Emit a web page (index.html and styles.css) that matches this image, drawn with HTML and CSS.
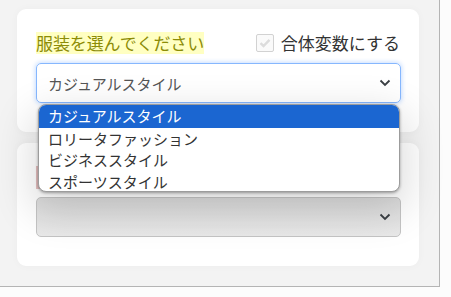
FILE: index.html
```html
<!doctype html>
<html lang="ja">
<head>
    <meta charset="UTF-8">
    <title>服装</title>
    <link rel="stylesheet" href="styles.css">
</head>
<body>
    <div class="frame">
        <div class="card">
            <div class="head">
                <span class="title">服装を選んでください</span>
                <label class="merge">
                    <span class="check">
                        <svg width="12" height="10" viewBox="0 0 12 10"><path d="M1.5 5.2 4.5 8 10.5 1.8" fill="none" stroke="#dcdcdc" stroke-width="2.4"/></svg>
                    </span>
                    合体変数にする
                </label>
            </div>
            <div class="selectWrap">
                <div class="select focus">
                    <span>カジュアルスタイル</span>
                    <svg class="chev" width="12" height="8" viewBox="0 0 12 8"><path d="M1.5 1.5 6 6 10.5 1.5" fill="none" stroke="#3a3f44" stroke-width="1.8"/></svg>
                </div>
                <ul class="popup">
                    <li class="on">カジュアルスタイル</li>
                    <li>ロリータファッション</li>
                    <li>ビジネススタイル</li>
                    <li>スポーツスタイル</li>
                </ul>
            </div>
        </div>
        <div class="card">
            <div class="head">
                <span class="title pink"></span>
            </div>
            <div class="select off">
                <span></span>
                <svg class="chev" width="12" height="8" viewBox="0 0 12 8"><path d="M1.5 1.5 6 6 10.5 1.5" fill="none" stroke="#3a3f44" stroke-width="1.8"/></svg>
            </div>
        </div>
    </div>
</body>
</html>
```
FILE: styles.css
```css
*{
    margin: 0;
    padding: 0;
    box-sizing: border-box;
}
body{
    background: #fcfcfc;
    font-family: "Noto Sans CJK JP", "Noto Sans", sans-serif;
}
.frame{
    width: 440px;height: 287px;
    background: #f3f3f3;
    border-right: 1px solid #b4b4b4;border-bottom: 1px solid #b4b4b4;
    padding: 9px 20px 0 17px;
    display: flex;flex-direction: column;gap: 11px;
}
.card{
    background: #fff;border-radius: 9px;
    padding: 23px 18px 29px 19px;
    box-shadow: 0 0 8px rgba(0,0,0,0.03);
}
.head{
    display: flex;justify-content: space-between;align-items: center;
    height: 22px;margin-bottom: 9px;
}
.title{
    background: #ffffc2;color: #8c8c06;
    font-size: 17px;line-height: 22px;letter-spacing: -0.1px;
}
.title.pink{
    display: block;width: 160px;height: 23px;
    background: #e9c3c3;
}
.merge{
    display: flex;align-items: center;gap: 7px;
    font-size: 17px;color: #333;line-height: 22px;
    margin-right: 1px;
}
.check{
    width: 18px;height: 18px;border: 1px solid #d2d2d2;border-radius: 2px;
    display: flex;align-items: center;justify-content: center;background: #fafafa;
}
.selectWrap{
    position: relative;
}
.select{
    height: 40px;border: 1px solid #c8c8c8;border-radius: 5px;
    display: flex;align-items: center;justify-content: space-between;
    padding: 0 9px 0 11px;
    font-size: 15px;color: #555;
}
.select.focus{
    border-color: #86b7fe;
    box-shadow: 0 0 4px 1px rgba(13,110,253,0.22);
}
.select.off{
    background: linear-gradient(#dcdcdc, #e9e9e9);border-color: #c4c4c4;
}
.popup{
    position: absolute;left: 2px;right: 1px;top: 41px;
    list-style: none;background: #fff;
    border: 1px solid #9c9c9c;border-radius: 8px;overflow: hidden;
    height: 88px;
    box-shadow: 0 1px 3px rgba(0,0,0,0.35), 0 14px 40px 6px rgba(0,0,0,0.14);
    z-index: 2;
}
.popup li{
    height: 21.5px;line-height: 21.5px;padding-left: 9px;
    font-size: 15px;color: #333;
}
.popup li.on{
    background: #1b66d1;color: #fff;height: 22.5px;
}
```
